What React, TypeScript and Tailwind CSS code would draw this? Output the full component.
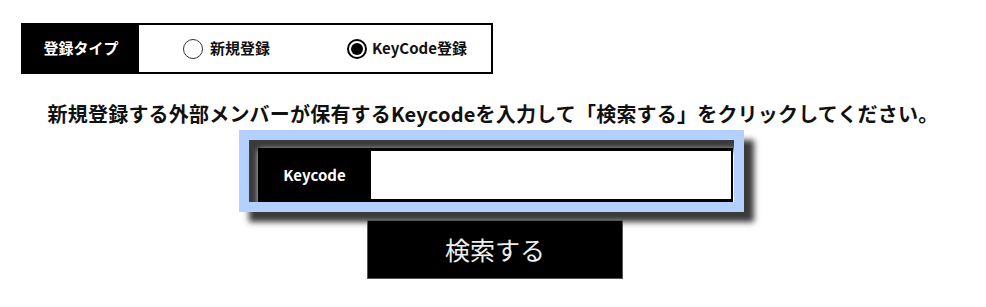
export default function App() {
  return (
    <div className="w-[986px] h-[307px] bg-white pt-[23px] font-['Noto_Sans_CJK_JP','Noto_Sans',sans-serif] text-[#111]">
      {/* 登録タイプ */}
      <div className="ml-[21px] flex h-[51px] w-[472px] border-2 border-black">
        <div className="flex w-[116px] items-center justify-center bg-black text-[15px] font-bold text-white">
          登録タイプ
        </div>
        <div className="flex flex-1 items-center pl-[44px] text-[15px] font-bold">
          <label className="flex w-[164px] items-center gap-[7px]">
            <span className="h-[20px] w-[20px] rounded-full border border-[#333] bg-white" />
            <span>新規登録</span>
          </label>
          <label className="flex items-center gap-[5px]">
            <span className="flex h-[20px] w-[20px] items-center justify-center rounded-full border-2 border-black bg-white">
              <span className="h-[12px] w-[12px] rounded-full bg-black" />
            </span>
            <span>KeyCode登録</span>
          </label>
        </div>
      </div>

      <p className="mt-[26px] text-center text-[20px] font-bold leading-[28px] tracking-[0.2px]">
        新規登録する外部メンバーが保有するKeycodeを入力して「検索する」をクリックしてください。
      </p>

      <div className="mt-[2px] flex justify-center pr-[3px]">
        <div className="w-[505px] border-[10px] border-[#b3d0ff] pl-[9px] pr-[1px] pt-[8px] shadow-[10px_10px_6px_#3a3a3a,inset_10px_10px_6px_#3a3a3a]">
          <div className="flex h-[54px] bg-black">
            <div className="flex w-[113px] items-center justify-center text-[15px] font-bold text-white">
              Keycode
            </div>
            <input
              type="text"
              className="my-[3px] mr-[2px] flex-1 bg-white px-2 text-[14px] outline-none"
            />
          </div>
        </div>
      </div>

      <div className="mt-[8px] flex justify-center pl-[4px]">
        <button className="h-[59px] w-[256px] border border-[#555] bg-black text-[25px] font-normal text-[#eee]">
          検索する
        </button>
      </div>
    </div>
  );
}
